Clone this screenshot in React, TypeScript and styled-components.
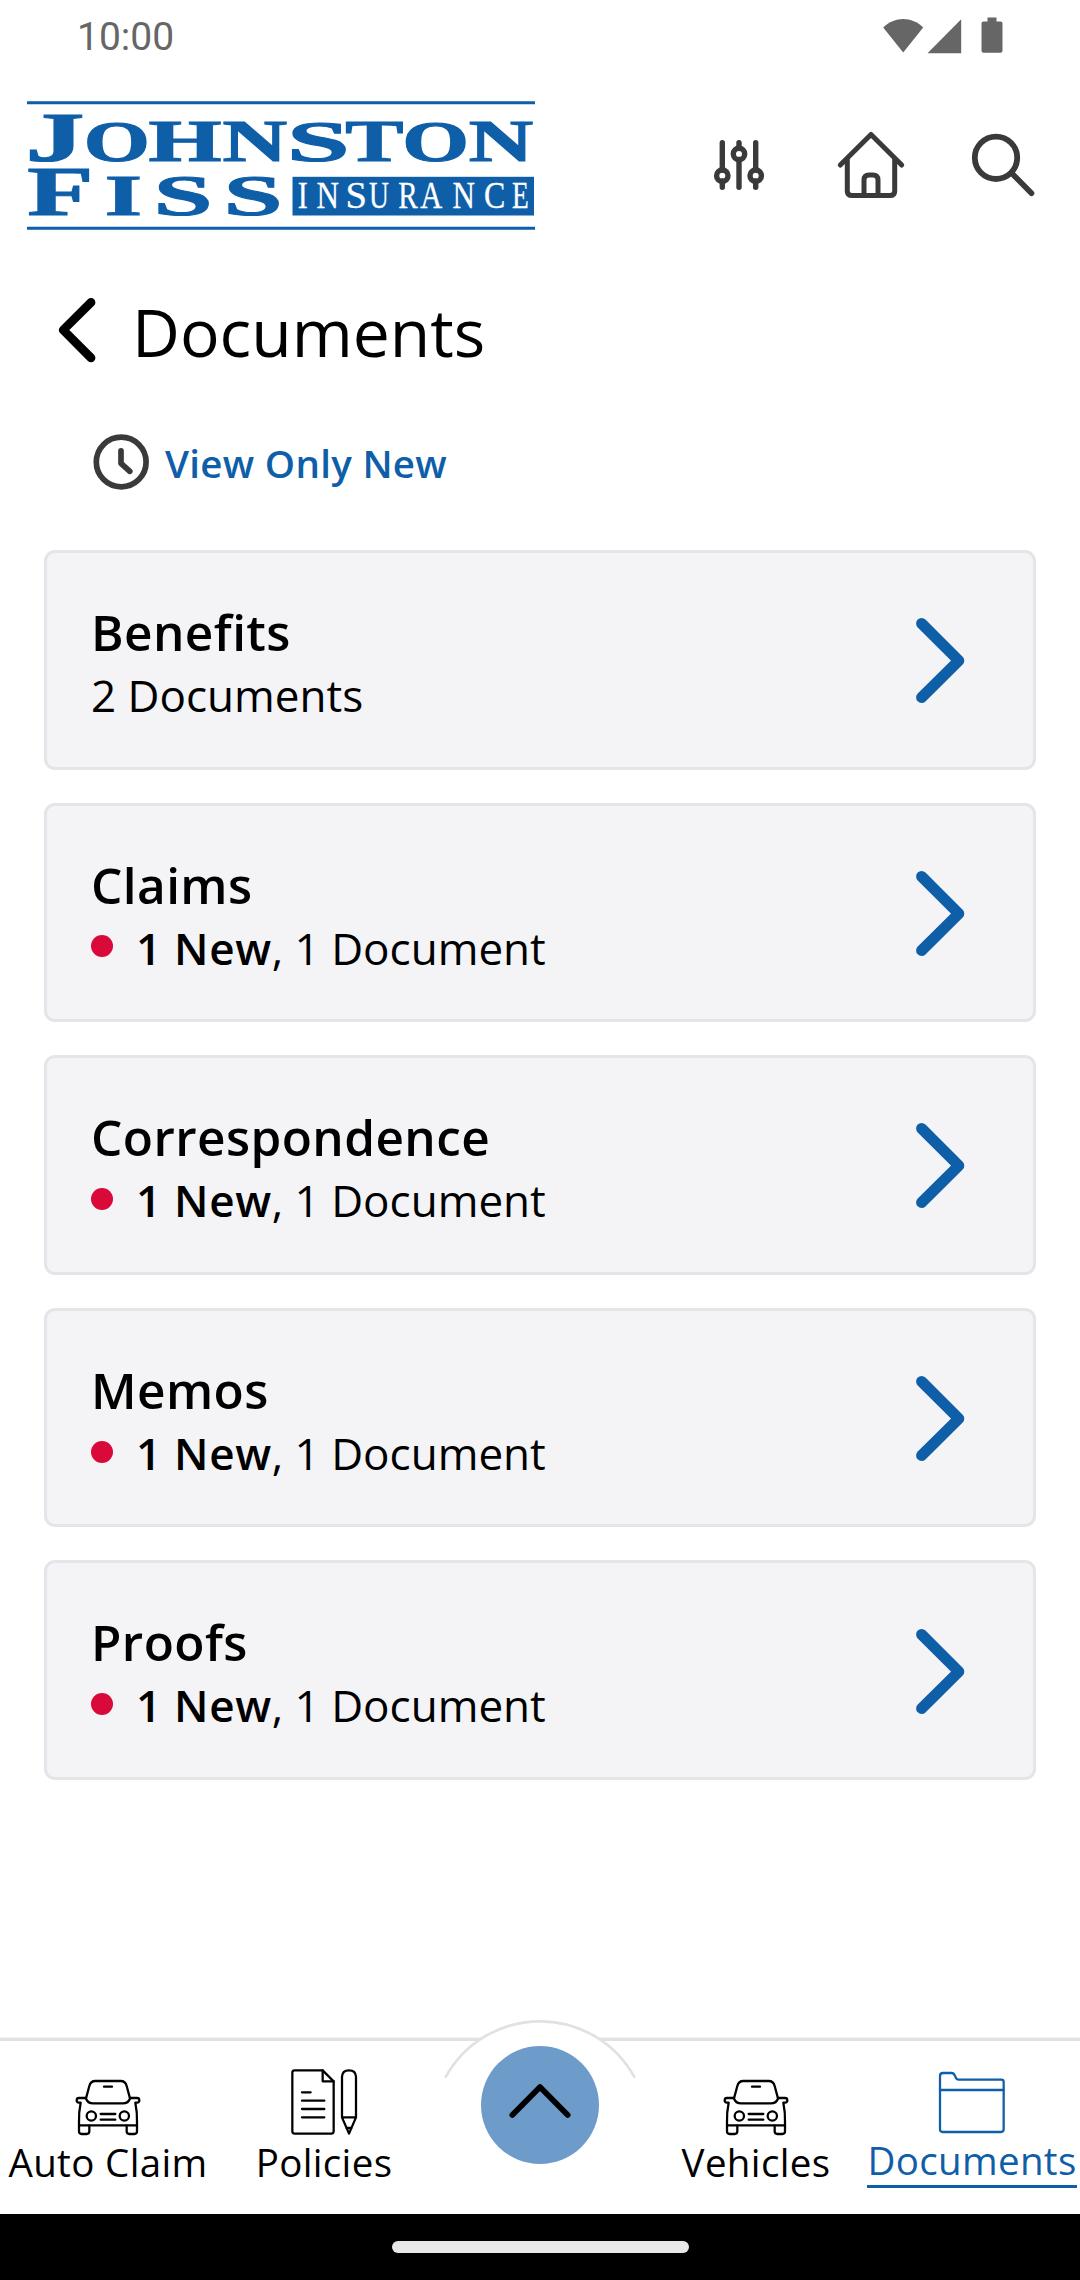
import React from "react";
import styled, { createGlobalStyle } from "styled-components";

const BLUE = "#0f5ea8";
const INK = "#3a3a3a";

const GlobalStyle = createGlobalStyle`
  * { box-sizing: border-box; }
  body { margin: 0; background: #fff; }
`;

const Screen = styled.div`
  width: 1080px;
  height: 2280px;
  display: flex;
  flex-direction: column;
  overflow: hidden;
  background: #fff;
  color: #000;
  font-family: "Open Sans", "Noto Sans", sans-serif;
  svg { display: block; flex: none; overflow: visible; }
`;

const StatusBar = styled.div`
  height: 66px;
  padding: 6px 77px 0 77px;
  display: flex;
  align-items: center;
  justify-content: space-between;
  color: #666;
  font-family: Roboto, sans-serif;
  font-size: 39px;
`;

const Clock = styled.span`
  padding-top: 2px;
`;

const Header = styled.header`
  height: 198px;
  padding: 0 43px 0 27px;
  display: flex;
  align-items: center;
  justify-content: space-between;
`;

const HeaderActions = styled.div`
  display: flex;
  align-items: center;
  gap: 64px;
`;

const TitleRow = styled.div`
  height: 132px;
  padding-left: 57px;
  display: flex;
  align-items: center;
`;

const Title = styled.h1`
  margin: 2px 0 0 35px;
  font-size: 66px;
  font-weight: 400;
  line-height: 90px;
`;

const FilterRow = styled.div`
  height: 131px;
  padding-left: 91px;
  display: flex;
  align-items: center;
  gap: 14px;
`;

const FilterLabel = styled.span`
  margin-top: 2px;
  color: ${BLUE};
  font-size: 38.5px;
  font-weight: 600;
  line-height: 52px;
  letter-spacing: 0.3px;
`;

const CardList = styled.main`
  flex: 1;
  padding: 23px 44px 0;
  display: flex;
  flex-direction: column;
  gap: 33px;
`;

const Card = styled.div`
  height: 219.6px;
  padding: 5px 68px 0 44px;
  display: flex;
  align-items: center;
  justify-content: space-between;
  border: 3px solid #e4e5e8;
  border-radius: 11px;
  background: #f4f4f7;
`;

const CardTitle = styled.div`
  font-size: 49.5px;
  font-weight: 600;
  line-height: 66px;
  letter-spacing: 0.42px;
`;

const CardMeta = styled.div`
  display: flex;
  align-items: center;
  font-size: 44px;
  line-height: 60.6px;
  white-space: pre;
`;

const NewDot = styled.span`
  width: 22px;
  height: 22px;
  margin: 0 23px 3px 0;
  border-radius: 50%;
  background: #d90a3a;
`;

const NewCount = styled.span`
  font-weight: 600;
  letter-spacing: 0.7px;
`;

const NavBar = styled.nav`
  position: relative;
  height: 176px;
  display: grid;
  grid-template-columns: repeat(5, 216px);
  border-top: 3px solid #e1e1e1;
  background: #fff;
  box-shadow: 0 -1px 0 #f3f3f3;
`;

const NavItem = styled.div<{ $active?: boolean }>`
  padding-top: 23px;
  display: flex;
  flex-direction: column;
  align-items: center;
  color: ${(p) => (p.$active ? BLUE : "#000")};
`;

const NavLabel = styled.span<{ $active?: boolean }>`
  font-size: 38.5px;
  line-height: ${(p) => (p.$active ? "49px" : "52px")};
  letter-spacing: 0.35px;
  border-bottom: ${(p) => (p.$active ? `3px solid ${BLUE}` : "none")};
  white-space: nowrap;
`;

const FabArch = styled.svg`
  position: absolute;
  left: 440px;
  top: -26px;
`;

const FabSlot = styled.div`
  position: relative;
  padding-top: 5px;
  display: flex;
  justify-content: center;
`;

const Fab = styled.div`
  width: 118px;
  height: 118px;
  padding-bottom: 3px;
  display: flex;
  align-items: center;
  justify-content: center;
  border-radius: 50%;
  background: #6e9cca;
`;

const GestureBar = styled.div`
  height: 66px;
  display: flex;
  align-items: center;
  justify-content: center;
  background: #000;
`;

const GesturePill = styled.div`
  width: 297px;
  height: 12px;
  border-radius: 6px;
  background: #e8e8e8;
`;

/* Left bearing, ink width and advance of each serif capital, in em. */
const BOLD: Record<string, number[]> = {
  J: [0.028, 0.453, 0.5], O: [0.043, 0.69, 0.778], H: [0.02, 0.74, 0.778],
  N: [0.016, 0.7, 0.722], S: [0.046, 0.466, 0.556], T: [0.022, 0.63, 0.667],
  F: [0.018, 0.558, 0.611], I: [0.026, 0.334, 0.389],
};
const REGULAR: Record<string, number[]> = {
  I: [0.025, 0.285, 0.333], N: [0.014, 0.69, 0.722], S: [0.062, 0.436, 0.556],
  U: [0.014, 0.69, 0.722], R: [0.018, 0.65, 0.667], A: [0.008, 0.706, 0.722],
  C: [0.03, 0.595, 0.667], E: [0.014, 0.546, 0.611],
};

type Letter = [ch: string, left: number, width: number, size: number, y: number];

const JOHNSTON: Letter[] = [
  ["J", 28.8, 53.5, 70, 160.5], ["O", 87.3, 58.7, 58, 160.5], ["H", 150.5, 69.5, 58.5, 160.7],
  ["N", 224, 62.7, 58.5, 160.7], ["S", 292.3, 52.5, 58, 160.3], ["T", 347.3, 55, 58.5, 160.7],
  ["O", 405.9, 59.3, 58, 160.5], ["N", 470.3, 62.5, 58.5, 160.7],
];
const FISS: Letter[] = [
  ["F", 29.2, 60.5, 69.5, 214.7], ["I", 107.2, 32, 57.8, 214.7],
  ["S", 158.6, 49.2, 57.5, 214.5], ["S", 228.6, 49.2, 57.5, 214.5],
];
const INSURANCE: Letter[] = [
  ["I", 298.6, 8.6, 37.3, 207], ["N", 317, 21.5, 37.3, 207], ["S", 347.9, 16.8, 37.3, 207],
  ["U", 369.3, 19, 37.3, 207], ["R", 398.9, 19, 37.3, 207], ["A", 420.5, 21.5, 37.3, 207],
  ["N", 452.9, 21.5, 37.3, 207], ["C", 485, 19, 37.3, 207], ["E", 512.5, 15, 37.3, 207],
];

function Wordmark({ letters, metrics, fill, weight, fatten }: {
  letters: Letter[]; metrics: Record<string, number[]>; fill: string; weight: number; fatten: number;
}) {
  return (
    <text fill={fill} stroke={fill} strokeWidth={fatten} fontWeight={weight} fontFamily="'Liberation Serif', serif">
      {letters.map(([ch, left, width, size, y], i) => {
        const [bearing, ink, advance] = metrics[ch];
        const k = width / ink;
        return (
          <tspan key={i} x={left - k * bearing} y={y} fontSize={size}
            textLength={k * advance} lengthAdjust="spacingAndGlyphs">{ch}</tspan>
        );
      })}
    </text>
  );
}

const Logo = () => (
  <svg width="508" height="129" viewBox="27 100.5 508 129">
    <path d="M27 102.2H535M27 227.8H535" stroke={BLUE} strokeWidth="3" />
    <Wordmark letters={JOHNSTON} metrics={BOLD} fill={BLUE} weight={700} fatten={1.1} />
    <Wordmark letters={FISS} metrics={BOLD} fill={BLUE} weight={700} fatten={1.1} />
    <rect x="292.5" y="176.3" width="241.5" height="38.7" fill={BLUE} />
    <Wordmark letters={INSURANCE} metrics={REGULAR} fill="#fff" weight={400} fatten={0.3} />
  </svg>
);

const StatusIcons = () => (
  <svg width="120" height="38" viewBox="883.5 15.5 120 38" fill="#666">
    <path d="M883.7 26C895 14.5 912.5 14.5 923.7 26L903.7 51Z" />
    <path d="M928 51.7L961.7 17.7V51.7Z" />
    <path d="M988 20V16H997V20H1001Q1003 20 1003 22V49.3Q1003 51.3 1001 51.3H984Q982 51.3 982 49.3V22Q982 20 984 20Z" />
  </svg>
);

const stroke = { fill: "none", strokeLinecap: "round", strokeLinejoin: "round" } as const;

const SlidersIcon = () => (
  <svg width="60" height="66" viewBox="714 132 60 66" {...stroke} stroke={INK} strokeWidth="5.4">
    <path d="M722.3 142.7V170M722.3 181V187.3M739 142.7V148M739 159.5V187.3M755.7 142.7V170M755.7 181V187.3" />
    <circle cx="722.3" cy="175.7" r="5.7" />
    <circle cx="739" cy="154" r="5.7" />
    <circle cx="755.7" cy="175.7" r="5.7" />
  </svg>
);

const HomeIcon = () => (
  <svg width="66" height="66" viewBox="838 132 66 66" {...stroke} stroke={INK} strokeWidth="5">
    <path d="M840.3 165L871 134.4L901.7 165" />
    <path d="M847.3 160V191Q847.3 195.6 852 195.6H890Q894.7 195.6 894.7 191V160" />
    <path d="M864 195V180Q864 175 869 175H873Q878 175 878 180V195" />
  </svg>
);

const SearchIcon = () => (
  <svg width="69" height="66" viewBox="968 132 69 66" {...stroke} stroke={INK}>
    <circle cx="996" cy="157.8" r="21.2" strokeWidth="5.8" />
    <path d="M1012 173.5L1031.5 193.3" strokeWidth="5.6" />
  </svg>
);

const BackIcon = () => (
  <svg width="40" height="66" viewBox="57 296.8 40 66" {...stroke} stroke="#000" strokeWidth="8.8">
    <path d="M91 302.2L63.2 329.8L91 357.6" />
  </svg>
);

const ClockIcon = () => (
  <svg width="60" height="60" viewBox="91 431.7 60 60" {...stroke} stroke={INK} strokeWidth="5.7">
    <circle cx="121.2" cy="461.7" r="24.9" />
    <path d="M121 450.5V463L129.8 471" />
  </svg>
);

const ChevronIcon = () => (
  <svg width="48" height="90" viewBox="916.7 617.5 48 90" {...stroke} stroke={BLUE} strokeWidth="11">
    <path d="M921.3 624L958.5 661.1L921.3 698" />
  </svg>
);

const navStroke = { ...stroke, width: 70, height: 72, stroke: "currentColor", strokeWidth: 6.8 };

const CarIcon = () => (
  <svg {...navStroke} viewBox="219 192 210 216">
    <path d="M258 295L268 258Q272 243 286 243H362Q376 243 380 258L390 295Q386 310 368 310H280Q262 310 258 295Z" />
    <path d="M258 294H237Q230 294 230 301Q230 308 237 308H242Q236 338 237 365V394Q237 402 245 402H260Q268 402 268 394V377" />
    <path d="M390 294H411Q418 294 418 301Q418 308 411 308H406Q412 338 411 365V394Q411 402 403 402H388Q380 402 380 394V377" />
    <path d="M237 376H411M302 342H346M302 359H346M312 260H336" />
    <circle cx="274" cy="348" r="14" />
    <circle cx="373" cy="348" r="14" />
  </svg>
);

const PolicyIcon = () => (
  <svg {...navStroke} viewBox="867 192 210 216">
    <path d="M884 211H968L1001 244V394Q1001 401 994 401H884Q877 401 877 394V218Q877 211 884 211Z" />
    <path d="M968 211V244H1001M906 277H932M906 302H973M906 327H973M906 352H973" />
    <path d="M1026 352V230Q1027 211 1047 211Q1067 211 1068 230V352L1047 401ZM1026 352H1068M1039 384H1055" />
  </svg>
);

const FolderIcon = () => (
  <svg {...navStroke} viewBox="831 192 210 216">
    <path d="M840 228Q840 219 849 219H875Q881 219 884 226L888 234Q890 239 896 239H1024Q1031 239 1031 246V388Q1031 396 1023 396H848Q840 396 840 388Z" />
    <path d="M840 270H1031" />
  </svg>
);

const folders = [
  { name: "Benefits", fresh: 0, total: "2 Documents" },
  { name: "Claims", fresh: 1, total: "1 Document" },
  { name: "Correspondence", fresh: 1, total: "1 Document" },
  { name: "Memos", fresh: 1, total: "1 Document" },
  { name: "Proofs", fresh: 1, total: "1 Document" },
];

export default function App() {
  return (
    <Screen>
      <GlobalStyle />
      <StatusBar>
        <Clock>10:00</Clock>
        <StatusIcons />
      </StatusBar>
      <Header>
        <Logo />
        <HeaderActions>
          <SlidersIcon />
          <HomeIcon />
          <SearchIcon />
        </HeaderActions>
      </Header>
      <TitleRow>
        <BackIcon />
        <Title>Documents</Title>
      </TitleRow>
      <FilterRow>
        <ClockIcon />
        <FilterLabel>View Only New</FilterLabel>
      </FilterRow>
      <CardList>
        {folders.map((f) => (
          <Card key={f.name}>
            <div>
              <CardTitle>{f.name}</CardTitle>
              <CardMeta>
                {f.fresh > 0 && <NewDot />}
                <span>
                  {f.fresh > 0 && <><NewCount>{f.fresh} New</NewCount>, </>}
                  {f.total}
                </span>
              </CardMeta>
            </div>
            <ChevronIcon />
          </Card>
        ))}
      </CardList>
      <NavBar>
        <FabArch width="200" height="64" viewBox="440 2015 200 64">
          <path d="M445.3 2077.7A107.7 107.7 0 0 1 634.7 2077.7" fill="#fff" stroke="#e1e1e1" strokeWidth="2.7" />
        </FabArch>
        <NavItem><CarIcon /><NavLabel>Auto Claim</NavLabel></NavItem>
        <NavItem><PolicyIcon /><NavLabel>Policies</NavLabel></NavItem>
        <FabSlot>
          <Fab>
            <svg width="60" height="40" viewBox="510 2084 60 40" {...stroke} stroke="#000" strokeWidth="5.7">
              <path d="M512.3 2115L540 2087L567.7 2115" />
            </svg>
          </Fab>
        </FabSlot>
        <NavItem><CarIcon /><NavLabel>Vehicles</NavLabel></NavItem>
        <NavItem $active><FolderIcon /><NavLabel $active>Documents</NavLabel></NavItem>
      </NavBar>
      <GestureBar><GesturePill /></GestureBar>
    </Screen>
  );
}
